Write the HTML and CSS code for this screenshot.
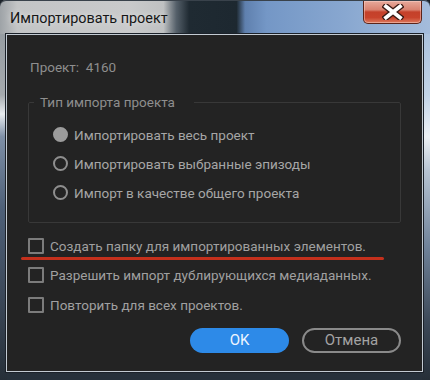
FILE: index.html
```html
<!DOCTYPE html>
<html lang="ru">

<head>
    <meta charset="UTF-8">
    <meta name="viewport" content="width=device-width, initial-scale=1.0">
    <title>Импортировать проект</title>
    <link rel="stylesheet" href="styles.css">
</head>

<body>

    <div class="window">
        <div class="titlebar">
            <span class="titlebar__text">Импортировать проект</span>
            <button class="titlebar__close" aria-label="Закрыть">
                <svg width="22" height="16" viewBox="0 0 22 16">
                    <path d="M4 2.5 L18 13.5 M18 2.5 L4 13.5" stroke="#3a1a14" stroke-width="6.4" stroke-linecap="square" />
                    <path d="M4 2.5 L18 13.5 M18 2.5 L4 13.5" stroke="#ffffff" stroke-width="3.8" stroke-linecap="square" />
                </svg>
            </button>
        </div>

        <div class="dialog">
            <p class="dialog__project">Проект:&nbsp; 4160</p>

            <fieldset class="group">
                <legend class="group__legend">Тип импорта проекта</legend>
                <label class="option"><span class="option__radio option__radio--on"></span>Импортировать весь проект</label>
                <label class="option"><span class="option__radio"></span>Импортировать выбранные эпизоды</label>
                <label class="option"><span class="option__radio"></span>Импорт в качестве общего проекта</label>
            </fieldset>

            <div class="checks">
                <label class="check check--marked"><span class="check__box"></span>Создать папку для импортированных элементов.</label>
                <label class="check"><span class="check__box"></span>Разрешить импорт дублирующихся медиаданных.</label>
                <label class="check"><span class="check__box"></span>Повторить для всех проектов.</label>
            </div>

            <div class="actions">
                <button class="btn btn--primary">OK</button>
                <button class="btn btn--ghost">Отмена</button>
            </div>
        </div>
    </div>

</body>

</html>
```

FILE: styles.css
```css
html {
    box-sizing: border-box;
    background: #1c232a;
}

*,
*:before,
*:after {
    box-sizing: inherit;
}

body {
    margin: 0;
    font-family: 'Roboto', 'Open Sans', sans-serif;
}

.window {
    width: 430px;
    height: 380px;
    display: flex;
    flex-direction: column;
    border-radius: 6px 6px 0 0;
    background-color: #27313b;
    background-image:
        linear-gradient(to right, #9ea3a7 0%, #c3c5c6 4%, #c9cacb 30%, #bfc1c2 38%, #55606a 41%, #1f2a32 44%, #1d2830 55%, #5f80ae 57%, #7497c6 62%, #88a7d0 80%, #a4bcdb 100%),
        linear-gradient(to bottom, #8e959b 0%, #a5aaae 25%, #e8ecef 30%, #7e8fa6 36%, #4e6078 55%, #3a4656 80%, #262f38 100%),
        linear-gradient(to bottom, #9fb8d6 0%, #c2d4e8 25%, #eef2f6 36%, #b6c3d2 45%, #6f8299 65%, #3c4857 85%, #262f38 100%);
    background-size: 100% 34px, 7px 100%, 8px 100%;
    background-position: left top, left top, right top;
    background-repeat: no-repeat;
    box-shadow: inset 0 1px 0 #39424b;
}

.titlebar {
    height: 34px;
    flex: none;
    display: flex;
    justify-content: space-between;
    align-items: flex-start;
}

.titlebar__text {
    padding: 9px 0 0 10px;
    font-family: 'Roboto', 'Open Sans', sans-serif;
    font-size: 14.4px;
    line-height: 20px;
    color: #161616;
    text-shadow: 0 0 6px rgba(255, 255, 255, 0.6);
}

.titlebar__close {
    width: 59px;
    height: 23px;
    margin: 1px 8px 0 0;
    padding: 0;
    display: flex;
    align-items: center;
    justify-content: center;
    border: 1px solid #5b2419;
    border-top: 0;
    border-radius: 0 0 5px 5px;
    background: linear-gradient(to bottom, #e7a99b 0%, #d98270 40%, #c4402a 50%, #c8432c 75%, #dd7a5e 100%);
    box-shadow: inset 0 0 0 1px rgba(255, 220, 210, 0.45);
}

.dialog {
    flex: 1;
    margin: 0 7px 8px 6px;
    padding: 22px 21px 0 21px;
    display: flex;
    flex-direction: column;
    background: #232323;
    border: 1px solid #c3cbd3;
    box-shadow: 0 0 0 1px #1b2129;
    color: #a2a2a2;
    font-size: 13.5px;
}

.dialog__project {
    margin: 0 0 15px 2px;
    line-height: 20px;
    color: #8e8e8e;
}

.group {
    margin: 0;
    padding: 8px 0 15px 5px;
    border: 1px solid #383838;
    border-radius: 2px;
}

.group__legend {
    padding: 0 19px 0 6px;
    line-height: 20px;
    color: #8e8e8e;
}

.option {
    display: flex;
    align-items: center;
    height: 29px;
    padding-left: 19px;
    color: #a6a6a6;
}

.option__radio {
    width: 15px;
    height: 15px;
    margin-right: 6px;
    border-radius: 50%;
    border: 2.5px solid #8e8e8e;
}

.option__radio--on {
    background: #9c9c9c;
    border-color: #9c9c9c;
}

.checks {
    margin-top: 8px;
}

.check {
    position: relative;
    display: flex;
    align-items: center;
    height: 29.5px;
    color: #a0a0a0;
}

.check__box {
    width: 16px;
    height: 16px;
    margin-right: 6px;
    border: 2px solid #7c7c7c;
    border-radius: 1px;
}

/* red underline marks the option */
.check--marked:after {
    content: '';
    position: absolute;
    left: -7px;
    width: 363px;
    bottom: 1px;
    height: 3px;
    border-radius: 2px;
    background: #c4301c;
}

.actions {
    margin-top: 8px;
    display: flex;
    justify-content: flex-end;
    gap: 13px;
}

.btn {
    width: 99px;
    height: 25px;
    border-radius: 13px;
    font-family: 'Roboto', 'Open Sans', sans-serif;
    font-size: 15px;
    padding: 0;
    cursor: pointer;
}

.btn--primary {
    background: #2d8ae8;
    border: 0;
    color: #eef5ff;
}

.btn--ghost {
    background: none;
    border: 2px solid #8a8a8a;
    color: #a3a3a3;
}
```
